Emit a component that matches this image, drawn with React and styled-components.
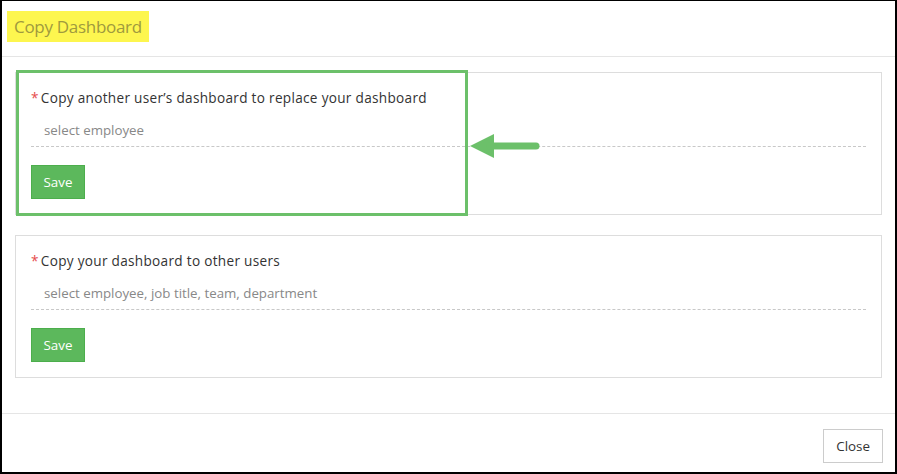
import styled, { createGlobalStyle } from "styled-components";

const GlobalStyle = createGlobalStyle`
  html, body {
    margin: 0;
    padding: 0;
    background: #fff;
  }
  body {
    font-family: "Open Sans", "Noto Sans", sans-serif;
    color: #333;
  }
`;

const Frame = styled.div`
  position: relative;
  box-sizing: border-box;
  width: 897px;
  height: 474px;
  border-style: solid;
  border-color: #000;
  border-width: 1px 2px 2px 2px;
  display: flex;
  flex-direction: column;
  background: #fff;
`;

const Header = styled.div`
  height: 56px;
  box-sizing: border-box;
  border-bottom: 1px solid #e5e5e5;
  padding: 10px 5px 0;
`;

const Title = styled.h4`
  display: inline-block;
  margin: 0;
  padding: 0 7px;
  height: 31px;
  line-height: 31px;
  background: #fdf64f;
  color: #9f9a3e;
  font-size: 17px;
  font-weight: 400;
  letter-spacing: -0.3px;
`;

const Body = styled.div`
  flex: 1;
  padding: 15px 13px 0;
  position: relative;
`;

const Card = styled.div`
  border: 1px solid #ddd;
  padding: 15px;
  margin-bottom: 20px;
`;

const Label = styled.div`
  font-size: 13.6px;
  line-height: 20px;
  letter-spacing: 0.3px;
  color: #333;
`;

const Required = styled.span`
  color: #e64b4b;
  margin-right: 2px;
`;

const Input = styled.input`
  display: block;
  width: 100%;
  box-sizing: border-box;
  margin-top: 5px;
  height: 34px;
  border: none;
  border-bottom: 1px dashed #c8c8c8;
  padding: 0 13px;
  font-family: inherit;
  font-size: 13.3px;
  color: #333;
  outline: none;
  background: transparent;
  &::placeholder {
    color: #888;
  }
`;

const Button = styled.button`
  box-sizing: border-box;
  height: 34px;
  padding: 0 12px;
  font-family: inherit;
  font-size: 13.4px;
  cursor: pointer;
  border-radius: 0;
  border: 1px solid ${(p) => (p.$primary ? "#4cae4c" : "#ccc")};
  background: ${(p) => (p.$primary ? "#5cb85c" : "#fff")};
  color: ${(p) => (p.$primary ? "#fff" : "#333")};
`;

const SaveButton = styled(Button)`
  margin-top: 18px;
  width: 54px;
  padding: 0;
`;

const Footer = styled.div`
  border-top: 1px solid #e5e5e5;
  padding: 15px 12px 0;
  height: 59px;
  box-sizing: border-box;
  display: flex;
  justify-content: flex-end;
  align-items: flex-start;
`;

const Highlight = styled.div`
  position: absolute;
  left: 14px;
  top: 69px;
  width: 452px;
  height: 146px;
  box-sizing: border-box;
  border: 3px solid #6cc06a;
  pointer-events: none;
`;

const Arrow = styled.svg`
  position: absolute;
  left: 466px;
  top: 132px;
  pointer-events: none;
`;

const App = () => {
  return (
    <>
      <GlobalStyle />
      <Frame>
        <Header>
          <Title>Copy Dashboard</Title>
        </Header>
        <Body>
          <Card>
            <Label>
              <Required>*</Required>Copy another user’s dashboard to replace
              your dashboard
            </Label>
            <Input placeholder="select employee" />
            <SaveButton $primary>Save</SaveButton>
          </Card>
          <Card>
            <Label>
              <Required>*</Required>Copy your dashboard to other users
            </Label>
            <Input placeholder="select employee, job title, team, department" />
            <SaveButton $primary>Save</SaveButton>
          </Card>
        </Body>
        <Footer>
          <Button>Close</Button>
        </Footer>
        <Highlight />
        <Arrow width="74" height="26" viewBox="0 0 74 26">
          <polygon points="2,13 26,1 26,25" fill="#6cc06a" />
          <line
            x1="22"
            y1="13"
            x2="68"
            y2="13"
            stroke="#6cc06a"
            strokeWidth="7"
            strokeLinecap="round"
          />
        </Arrow>
      </Frame>
    </>
  );
};

export default App;
